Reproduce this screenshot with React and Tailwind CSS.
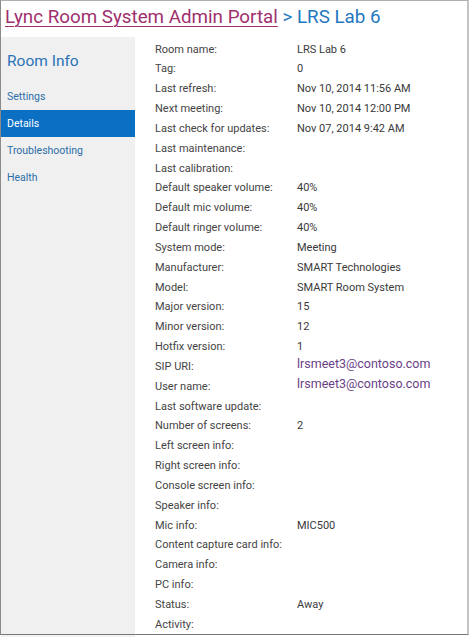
import React from "react";

const rows = [
  ["Room name:", "LRS Lab 6"],
  ["Tag:", "0"],
  ["Last refresh:", "Nov 10, 2014 11:56 AM"],
  ["Next meeting:", "Nov 10, 2014 12:00 PM"],
  ["Last check for updates:", "Nov 07, 2014 9:42 AM"],
  ["Last maintenance:", ""],
  ["Last calibration:", ""],
  ["Default speaker volume:", "40%"],
  ["Default mic volume:", "40%"],
  ["Default ringer volume:", "40%"],
  ["System mode:", "Meeting"],
  ["Manufacturer:", "SMART Technologies"],
  ["Model:", "SMART Room System"],
  ["Major version:", "15"],
  ["Minor version:", "12"],
  ["Hotfix version:", "1"],
  ["SIP URI:", "lrsmeet3@contoso.com", true],
  ["User name:", "lrsmeet3@contoso.com", true],
  ["Last software update:", ""],
  ["Number of screens:", "2"],
  ["Left screen info:", ""],
  ["Right screen info:", ""],
  ["Console screen info:", ""],
  ["Speaker info:", ""],
  ["Mic info:", "MIC500"],
  ["Content capture card info:", ""],
  ["Camera info:", ""],
  ["PC info:", ""],
  ["Status:", "Away"],
  ["Activity:", ""],
];

const navItems = ["Settings", "Details", "Troubleshooting", "Health"];

export default function App() {
  return (
    <div className="w-[471px] h-[638px] bg-white font-['Roboto',sans-serif]">
      <div className="w-[469px] h-[635px] flex flex-col border-l border-t border-b border-r-2 border-l-[#8a8a8a] border-t-[#b0b0b0] border-b-[#777] border-r-[#c4c4c4]">
        {/* header */}
        <div className="h-[36px] pl-[4px] pt-[3px] text-[18.8px] leading-[26px] whitespace-nowrap">
          <span className="text-[#a0306e] underline decoration-1 underline-offset-[3px]">
            Lync Room System Admin Portal
          </span>
          <span className="text-[#1f78c1]"> &gt; LRS Lab 6</span>
        </div>

        <div className="flex flex-1 min-h-0">
          {/* sidebar */}
          <div className="w-[134px] bg-[#f0f0f0] pt-[12px]">
            <div className="px-[6px] text-[15.5px] leading-[24px] text-[#2a73b8] mb-[10px]">Room Info</div>
            {navItems.map((item) => (
              <div
                key={item}
                className={`h-[27px] pl-[6px] flex items-center text-[10.5px] ${
                  item === "Details" ? "bg-[#0b6fc4] text-white" : "text-[#2a6ea8]"
                }`}
              >
                {item}
              </div>
            ))}
          </div>

          {/* details */}
          <div className="flex-1 pl-[20px] pt-[3px] text-[11px] text-[#444]">
            {rows.map(([label, value, link]) => (
              <div key={label} className="flex h-[19.83px] items-center whitespace-nowrap">
                <div className="w-[142px]">{label}</div>
                <div
                  className={
                    link ? "text-[12.5px] text-[#6a3f86] -mt-[6px]" : "text-[#3a3a3a]"
                  }
                >
                  {value}
                </div>
              </div>
            ))}
          </div>
        </div>
      </div>
      <div className="w-[134px] h-[2px] ml-[1px] bg-[#f2f2f2]" />
    </div>
  );
}
